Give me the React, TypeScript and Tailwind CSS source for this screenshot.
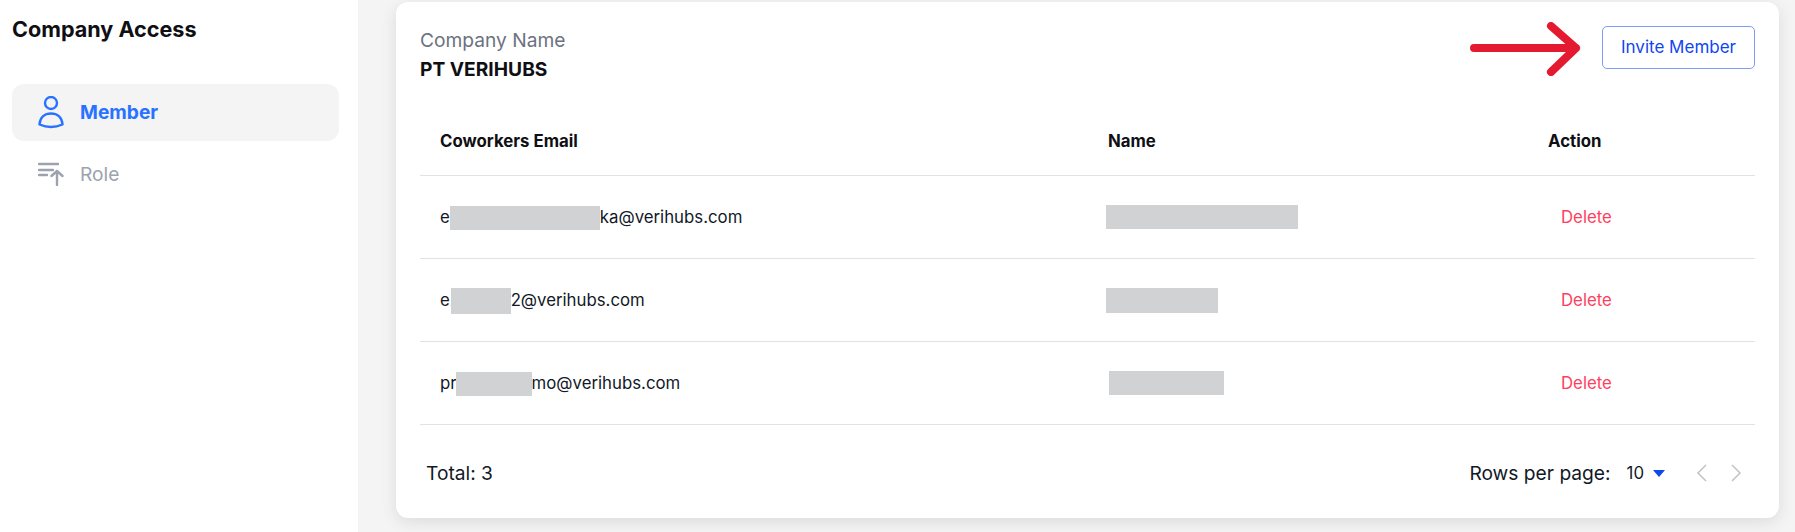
const font = { fontFamily: "Inter, sans-serif" };

function Redact({ className }: { className: string }) {
  return <span className={`inline-block shrink-0 bg-[#d1d2d4] ${className}`} />;
}

function Row({ email, name }: { email: React.ReactNode; name: React.ReactNode }) {
  return (
    <div className="grid h-[83px] grid-cols-[688px_440px_1fr] border-b border-[#e2e2e2] items-center">
      <div className="flex items-center pl-5 pt-0.5 text-[16.8px] text-[#111827]">{email}</div>
      <div className="flex items-center">{name}</div>
      <div className="pl-[13px] pt-0.5 text-[16.8px] text-[#ff3f5e]">Delete</div>
    </div>
  );
}

export default function App() {
  return (
    <div className="flex h-[532px] w-[1795px] overflow-hidden bg-white" style={font}>
      <aside className="w-[358px] shrink-0 bg-white pl-3 pr-[19px]">
        <h1 className="pt-[15px] text-[21.6px] font-bold leading-[28px] text-[#0f0f14]">Company Access</h1>
        <nav className="mt-[41px] flex flex-col">
          <div className="flex h-[57px] items-center gap-[17px] rounded-[12px] bg-[#f4f4f5] pl-[26px]">
            <svg width="26" height="33" viewBox="0 0 26 33" fill="none" stroke="#2972ff" strokeWidth="2.4">
              <circle cx="13" cy="7" r="6" />
              <path d="M1.5 28.5C2 21 7 17.5 13 17.5S24 21 24.5 28.5C21 30 17 31 13 31S5 30 1.5 28.5Z" strokeLinejoin="round" />
            </svg>
            <span className="-ml-px text-[19.2px] font-bold text-[#2972ff]">Member</span>
          </div>
          <div className="flex h-[66px] items-center gap-[17px] pl-[26px]">
            <svg width="26" height="24" viewBox="0 0 26 24" fill="none" stroke="#9ca3af" strokeWidth="2.4" strokeLinecap="round" strokeLinejoin="round">
              <path d="M1 2H20M1 8H15M1 13H9M19 23V9M13.5 14L19 9L24.5 14" />
            </svg>
            <span className="-ml-px text-[19.2px] text-[#9ca3af]">Role</span>
          </div>
        </nav>
      </aside>
      <main className="flex-1 bg-[#f4f4f4] pl-[38px] pr-4 pt-[2px]">
        <section className="relative h-[516px] rounded-[12px] bg-white px-6 shadow-[0_4px_16px_rgba(0,0,0,0.10)]">
          <header className="flex items-start justify-between pt-6">
            <div className="pt-px">
              <div className="text-[19.2px] leading-[27px] text-[#6b7280]">Company Name</div>
              <div className="mt-[2px] text-[19.2px] font-bold leading-[27px] text-[#0f0f14]">PT VERIHUBS</div>
            </div>
            <button className="h-[43px] w-[153px] rounded-[5px] border border-[#7c9cf5] bg-white text-[17px] font-normal text-[#0f46f0]">
              Invite Member
            </button>
          </header>
          <svg className="absolute left-[1074px] top-[20px]" width="112" height="54" viewBox="0 0 112 54" fill="none" stroke="#e41a30" strokeWidth="8" strokeLinecap="round" strokeLinejoin="round">
            <path d="M4 26H106M81 4L106 26L81 50" />
          </svg>
          <div className="mt-[25px] grid h-[68px] grid-cols-[688px_440px_1fr] items-center border-b border-[#e2e2e2] text-[16.8px] font-bold text-[#0f0f14]">
            <div className="pl-5">Coworkers Email</div>
            <div>Name</div>
            <div>Action</div>
          </div>
          <Row
            email={<>e<Redact className="h-6 w-[150px]" />ka@verihubs.com</>}
            name={<Redact className="-ml-0.5 h-6 w-[192px]" />}
          />
          <Row
            email={<>e.<Redact className="-ml-1 h-[26px] w-[60px]" />2@verihubs.com</>}
            name={<Redact className="-ml-0.5 h-[25px] w-[112px]" />}
          />
          <Row
            email={<>pr<Redact className="-ml-[1px] h-6 w-[76px]" />mo@verihubs.com</>}
            name={<Redact className="ml-px h-6 w-[115px]" />}
          />
          <footer className="flex items-center justify-between pl-1.5 pr-[13px] pt-[34px]">
            <div className="text-[19.2px] text-[#111827]">Total: 3</div>
            <div className="flex items-center text-[#111827]">
              <span className="text-[19.2px]">Rows per page:</span>
              <span className="ml-[16px] text-[16.8px]">10</span>
              <svg className="ml-[9px]" width="12" height="7" viewBox="0 0 12 7"><path d="M0 0H12L6 7Z" fill="#0f46f0" /></svg>
              <svg className="ml-[31px]" width="11" height="18" viewBox="0 0 11 18" fill="none" stroke="#c4c4c4" strokeWidth="1.6"><path d="M10 1L2 9L10 17" /></svg>
              <svg className="ml-6" width="11" height="18" viewBox="0 0 11 18" fill="none" stroke="#c4c4c4" strokeWidth="1.6"><path d="M1 1L9 9L1 17" /></svg>
            </div>
          </footer>
        </section>
      </main>
    </div>
  );
}
